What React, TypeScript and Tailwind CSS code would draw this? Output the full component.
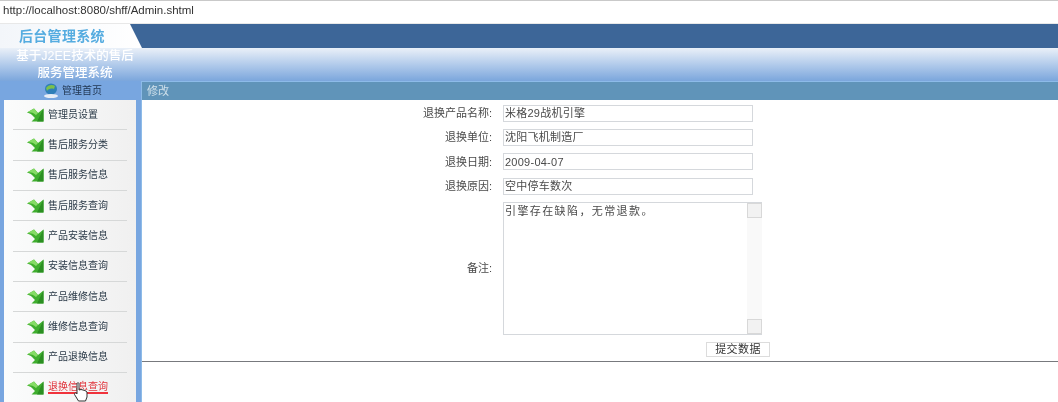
import React from 'react';

const FONT = "font-['Liberation_Sans','Noto_Sans_CJK_SC',sans-serif]";

const menuItems = [
  '管理员设置',
  '售后服务分类',
  '售后服务信息',
  '售后服务查询',
  '产品安装信息',
  '安装信息查询',
  '产品维修信息',
  '维修信息查询',
  '产品退换信息',
  '退换信息查询',
];

const fields = [
  { label: '退换产品名称:', value: '米格29战机引擎' },
  { label: '退换单位:', value: '沈阳飞机制造厂' },
  { label: '退换日期:', value: '2009-04-07' },
  { label: '退换原因:', value: '空中停车数次' },
];

const ArrowIcon = () => (
  <svg width="17" height="14" viewBox="0 0 17 14" className="shrink-0">
    <path d="M0 4.5 L7 0.5 L11 5 L16.5 0.5 L16.5 13.5 L4.5 13.5 L8 10 L5 7 C3.5 5.5 2 5 0 4.5 Z" fill="#3fae2e" />
    <path d="M0 4.5 L7 0.5 L11 5 L9 7 C6 4.5 3 4 0 4.5 Z" fill="#86dc66" />
    <path d="M16.5 0.5 L16.5 13.5 L10 13.5 Z" fill="#2b8f22" />
  </svg>
);

const HandCursor = () => (
  <svg width="16" height="20" viewBox="0 0 16 20" className="absolute left-[60px] top-[9px]">
    <path
      d="M4 1.5 C4 .5 6 .5 6 1.5 L6 8 L8 7.5 L10 8 L12 8.5 L14 10 L14 15 L12.5 19 L5.5 19 L1.5 12.5 C1 11 2.5 10.5 3.5 11.5 L4 12 Z"
      fill="#fff"
      stroke="#333"
      strokeWidth="1"
    />
  </svg>
);

const MenuItem = ({ label, active }: { label: string; active: boolean }) => (
  <div className="relative mx-[9px] flex h-[30.35px] items-center gap-[4px] border-b border-[#d6d8d8] pl-[14px]">
    <ArrowIcon />
    <span
      className={
        active
          ? 'border-b-2 border-[#f0333c] text-[10px] leading-[11px] text-[#e0323a]'
          : 'text-[10px] leading-[12px] text-[#2b3a48]'
      }
    >
      {label}
    </span>
    {active && <HandCursor />}
  </div>
);

const FieldRow = ({ label, value }: { label: string; value: string }) => (
  <div className="flex h-[24.4px] items-center">
    <div className="w-[350px] text-right text-[11px] text-[#4a4a4a]">{label}</div>
    <div className="ml-[11px] flex h-[17px] w-[250px] items-center border border-[#d5d8dc] pl-[1px] text-[11px] tracking-[0.25px] text-[#4a4a4a]">
      {value}
    </div>
  </div>
);

const App = () => {
  return (
    <div className={`h-[402px] w-[1058px] overflow-hidden bg-white blur-[0.4px] ${FONT}`}>
      <div className="h-[23px] border-t border-[#c9c9c9] bg-white pl-[3px] text-[11.5px] leading-[19px] text-[#333]">
        http://localhost:8080/shff/Admin.shtml
      </div>
      <div className="h-px bg-[#e8e8e8]" />

      <div className="h-[24px] bg-[#3d6698]">
        <div className="flex h-full w-[142px] items-center bg-gradient-to-r from-[#f3f6fa] to-white pl-[19px] text-[14px] font-bold tracking-[0.3px] text-[#55ace0] [clip-path:polygon(0_0,130px_0,142px_100%,0_100%)]">
          后台管理系统
        </div>
      </div>

      <div className="h-[33px] bg-gradient-to-b from-[#eaf0f8] to-[#7ba6dc]">
        <div className="w-[150px] text-center text-[12.5px] font-medium leading-[17px] text-white">
          基于J2EE技术的售后
          <br />
          服务管理系统
        </div>
      </div>

      <div className="flex h-[322px]">
        <aside className="w-[141px] shrink-0 bg-[#78a6e0]">
          <div className="flex h-[19px] items-center pl-[42px]">
            <svg width="18" height="16" viewBox="0 0 18 16" className="shrink-0">
              <ellipse cx="9" cy="6" rx="6" ry="5.5" fill="#2f7fb8" />
              <path d="M4 5 C6 2 10 1 13 3 L12 6 C9 5 6 6 5 8 Z" fill="#7bc04c" />
              <ellipse cx="9" cy="13" rx="7" ry="2" fill="#e8eef6" />
            </svg>
            <span className="ml-[2px] text-[10px] text-[#1f3550]">管理首页</span>
          </div>
          <div className="ml-[4px] w-[132px] bg-gradient-to-r from-[#fbfcfc] to-[#f0f0f0]">
            {menuItems.map((item, i) => (
              <MenuItem key={item} label={item} active={i === menuItems.length - 1} />
            ))}
          </div>
        </aside>

        <main className="min-w-0 flex-1 border-l border-[#8dbbe8]">
          <div className="h-[19px] border-t border-[#8dbbe8] bg-[#6094b9] pl-[5px] text-[11px] leading-[18px] text-[#cfe0ea]">
            修改
          </div>
          <div className="h-[262px] border-b border-[#77797d]">
            <div className="pt-[1px]">
              {fields.map((f) => (
                <FieldRow key={f.label} label={f.label} value={f.value} />
              ))}
            </div>
            <div className="mt-[3px] flex items-center">
              <div className="w-[350px] text-right text-[11px] text-[#4a4a4a]">备注:</div>
              <div className="relative ml-[11px] h-[133px] w-[259px] border-y border-l border-[#d5d8dc] pl-[1px] text-[11px] tracking-[1.4px] text-[#4a4a4a]">
                引擎存在缺陷，无常退款。
                <div className="absolute inset-y-0 right-0 w-[15px] bg-[#f9f9f9]" />
                <div className="absolute right-0 top-0 h-[15px] w-[15px] border border-[#d8d8d8] bg-[#f2f2f2]" />
                <div className="absolute bottom-0 right-0 h-[15px] w-[15px] border border-[#d8d8d8] bg-[#f2f2f2]" />
              </div>
            </div>
            <div className="ml-[564px] mt-[7px] flex h-[15px] w-[64px] items-center justify-center border border-[#dcdcdc] text-[11px] tracking-[0.4px] text-[#333]">
              提交数据
            </div>
          </div>
        </main>
      </div>
    </div>
  );
};

export default App;
